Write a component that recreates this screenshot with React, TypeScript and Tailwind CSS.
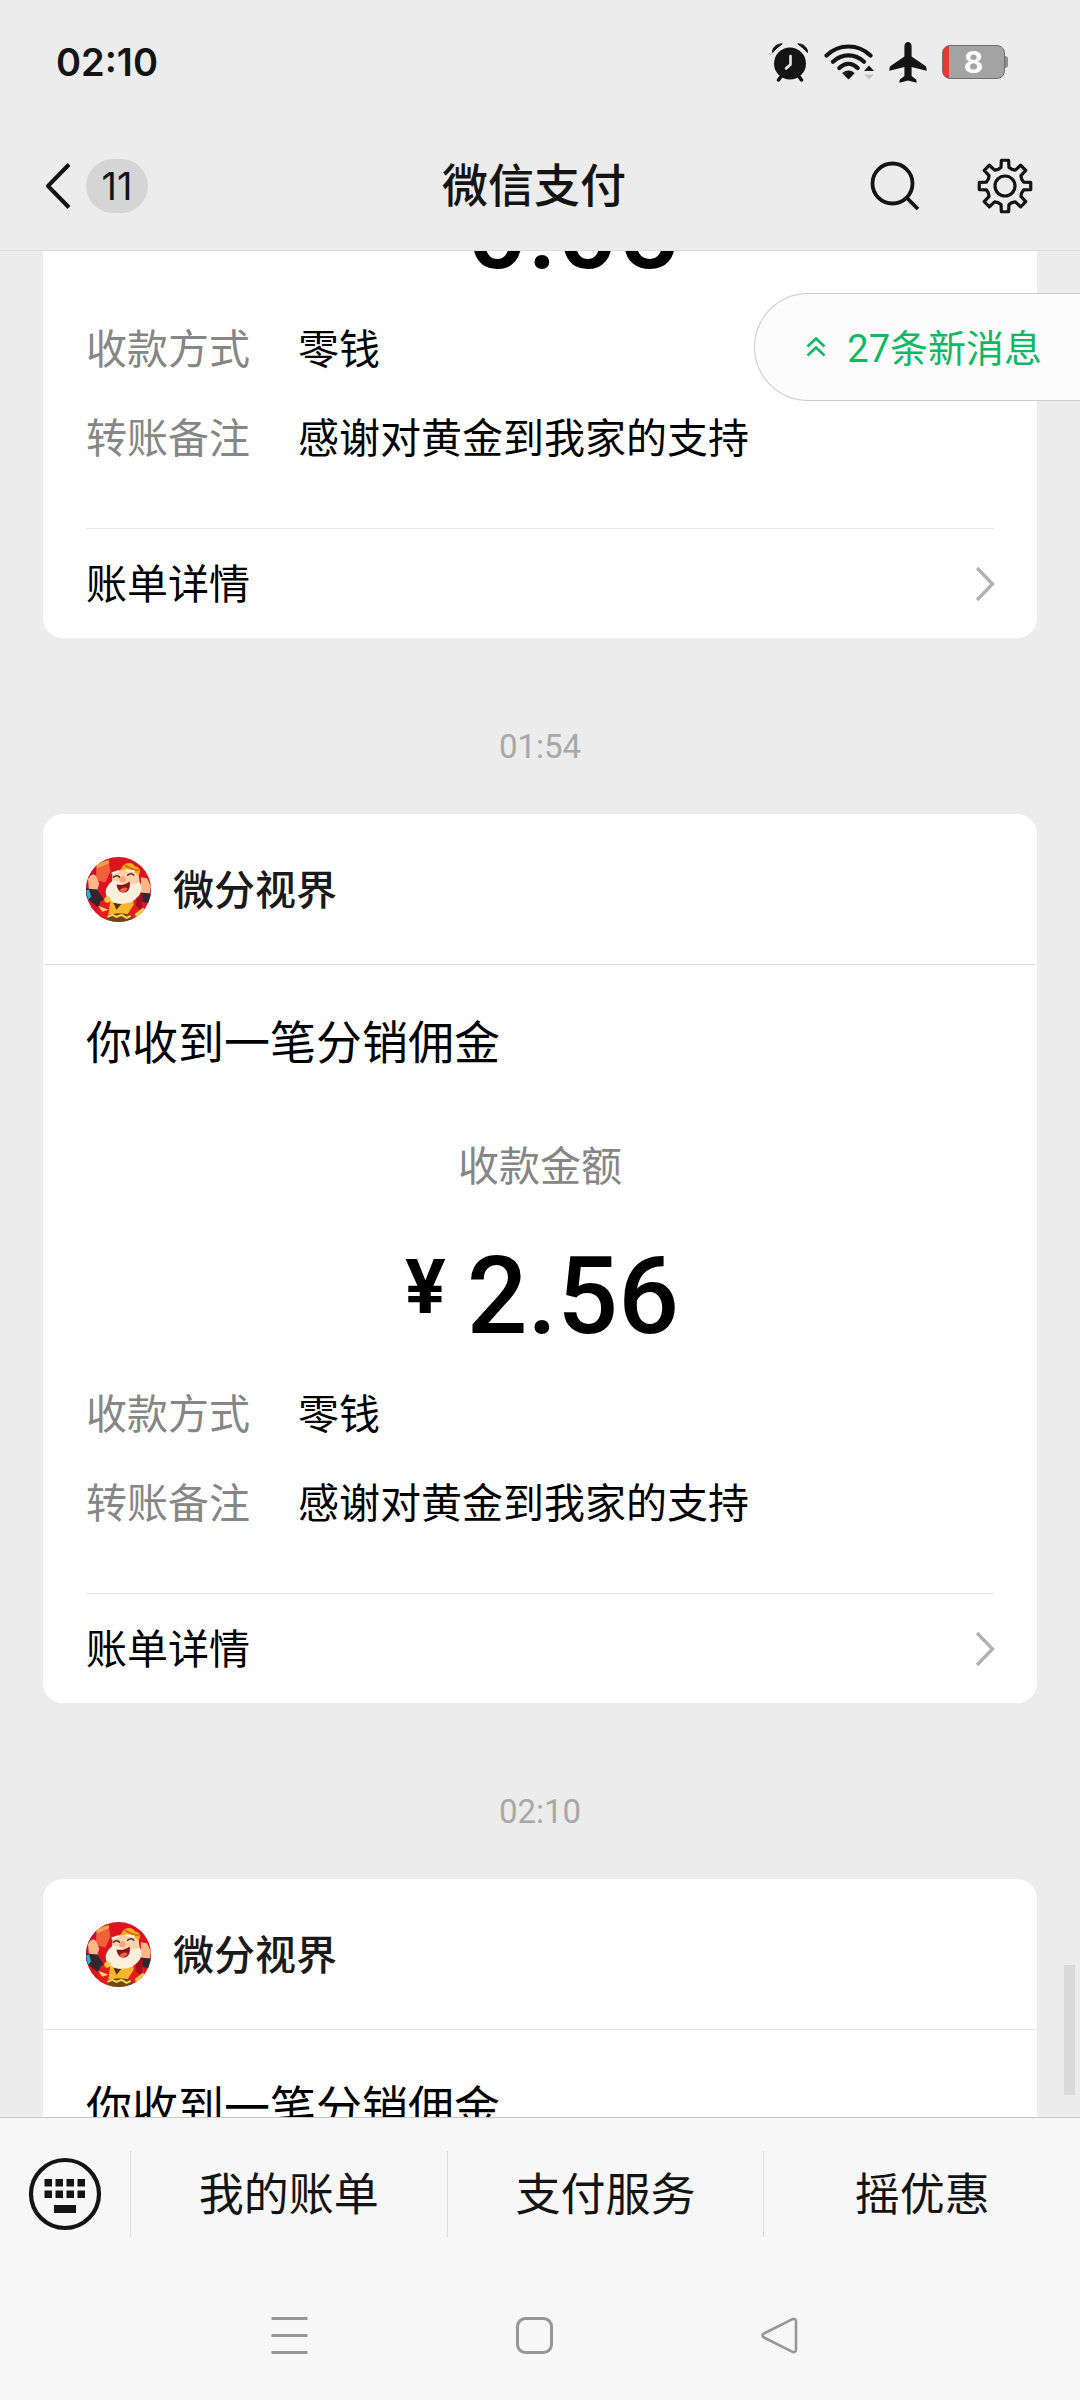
import React from "react";

type Payment = { id: number; time?: string; amount: string };

const payments: Payment[] = [
  { id: 1, amount: "0.05" },
  { id: 2, time: "01:54", amount: "2.56" },
  { id: 3, time: "02:10", amount: "2.56" },
];

const shortcuts = ["我的账单", "支付服务", "摇优惠"];

function AlarmIcon() {
  return (
    <svg className="h-[39px] w-[38px]" viewBox="0 0 38 39" fill="none" aria-hidden="true">
      <path d="M1.6 9.6C1 5 5.500.6 11.200.9 8.500 3 4.500 6 1.600 9.600Z" fill="#141414" stroke="#141414" strokeLinejoin="round" />
      <path d="M36.400 9.600C37 5 32.500.6 26.800.9 29.500 3 33.500 6 36.400 9.600Z" fill="#141414" stroke="#141414" strokeLinejoin="round" />
      <circle cx="19" cy="20.500" r="16" fill="#141414" />
      <path d="M10 33.500 7.500 37M28 33.500 30.500 37" stroke="#141414" strokeWidth="3.500" strokeLinecap="round" />
      <path d="M19.500 13v8.500l-4.500 4" stroke="#ececec" strokeWidth="2.600" strokeLinecap="round" strokeLinejoin="round" />
    </svg>
  );
}

function WifiIcon() {
  return (
    <svg className="h-[36px] w-[50px]" viewBox="0 0 50 36" fill="none" aria-hidden="true">
      <g stroke="#141414" strokeWidth="4.200" strokeLinecap="round">
        <path d="M2.500 11.500C15-.5 34-.5 46.500 11.500" />
        <path d="M9 17.800C18 9.300 31 9.300 40 17.800" />
        <path d="M15.300 24C21 18.500 28 18.500 33.700 24" />
      </g>
      <path d="M18.300 29.200C21.500 25.500 27.500 25.500 30.700 29.200L24.500 35.500Z" fill="#141414" />
      <path d="m45 21.500 5 5.500H40Z" fill="#141414" />
      <path d="M40 30.500h10L45 35.500Z" fill="#c4c4c4" />
    </svg>
  );
}

function PlaneIcon() {
  return (
    <svg className="h-[41px] w-[38px]" viewBox="0 0 38 41" fill="#141414" aria-hidden="true">
      <path d="M19 0c2.200 0 3.600 2 3.600 4.500v10l13.500 9.200c1.200.8 1.800 2.800 1.500 5L22.600 25v9l4.200 3.200c.7.600.9 2 .7 3.600L19 38.500l-8.500 2.300c-.2-1.600 0-3 .7-3.600l4.200-3.200v-9L.4 28.700c-.3-2.200.3-4.200 1.500-5l13.500-9.200v-10C15.400 2 16.800 0 19 0Z" />
    </svg>
  );
}

function Battery() {
  return (
    <span className="flex items-center" role="img" aria-label="电量 8%">
      <span className="flex h-[34px] w-[63px] items-center justify-center overflow-hidden rounded-[8px] border border-[#6f6f6f] bg-[linear-gradient(to_right,#e53935_6px,#a3a3a3_6px)] font-[Inter] text-[30px] leading-none font-bold text-white">
        8
      </span>
      <span className="h-[12px] w-[3px] rounded-r-[3px] bg-[#8c8c8c]" />
    </span>
  );
}

function BackIcon() {
  return (
    <svg className="h-[48px] w-[26px]" viewBox="0 0 26 48" fill="none" stroke="#141414" strokeWidth="4" strokeLinejoin="round" aria-hidden="true">
      <path d="M24 2.500 3 24l21 21.500" />
    </svg>
  );
}

function SearchIcon() {
  return (
    <svg className="h-[50px] w-[50px]" viewBox="0 0 50 50" fill="none" stroke="#141414" strokeWidth="3.800" aria-hidden="true">
      <circle cx="22.500" cy="22.500" r="20" />
      <path d="m36.500 36.500 11.500 11.500" />
    </svg>
  );
}

// One gear tooth per 45 degrees, joined by shallow valleys.
const gearPoints = Array.from({ length: 8 }, (_, i) => {
  const base = i * 45;
  return [
    [-22, 18],
    [-12, 19],
    [-8, 26],
    [8, 26],
    [12, 19],
  ]
    .map(([angle, radius]) => {
      const rad = ((base + angle) * Math.PI) / 180;
      return `${(28 + radius * Math.sin(rad)).toFixed(2)},${(28 - radius * Math.cos(rad)).toFixed(2)}`;
    })
    .join(" ");
}).join(" ");

function GearIcon() {
  return (
    <svg className="h-[56px] w-[56px]" viewBox="0 0 56 56" fill="none" stroke="#141414" strokeWidth="3.200" strokeLinejoin="round" aria-hidden="true">
      <polygon points={gearPoints} />
      <circle cx="28" cy="28" r="10" />
    </svg>
  );
}

function DoubleUpIcon() {
  return (
    <svg className="h-[22px] w-[20px]" viewBox="0 0 20 22" fill="none" stroke="#10b863" strokeWidth="2.600" aria-hidden="true">
      <path d="m1.500 10.500 8.500-8 8.500 8M1.500 19.500l8.500-8 8.500 8" />
    </svg>
  );
}

function ChevronRight() {
  return (
    <svg className="h-[36px] w-[20px]" viewBox="0 0 20 36" fill="none" stroke="#b2b2b2" strokeWidth="3.400" aria-hidden="true">
      <path d="m2 2 15.500 16L2 34" />
    </svg>
  );
}

function Avatar() {
  return (
    <svg className="size-[65px] rounded-full" viewBox="0 0 64 64" aria-hidden="true">
      <rect width="64" height="64" fill="#dc1420" />
      <path d="M0 0h22L10 34 0 40Z" fill="#c8102e" />
      <path d="M10 7 22 3l2 11-5 11-9-2Z" fill="#f0603c" />
      <path d="M10 7 22 3l1 3-12 5Z" fill="#f9a04a" />
      <path d="M2 22c2-5 6-6 8-3l3 7-2 7-8 1Z" fill="#fbb98a" />
      <path d="M0 31 11 32l8 12-8 5L0 40Z" fill="#33262e" />
      <path d="M0 33l3-1 2 7-3 3Z" fill="#2bb5cf" />
      <path d="M54 20l6 1 4 8-2 9-8-2Z" fill="#fbb98a" />
      <path d="M53 35l11 1v10l-9-2Z" fill="#33262e" />
      <path d="M14 44 24 37l24-1 9 9 2 19H10Z" fill="#e81b1e" />
      <path d="M50 34l6 3-1 17-6-6Z" fill="#a80d1c" />
      <path d="M24 42 40 45l6-6 1 8-11 17H21Z" fill="#f3b62c" />
      <path d="m27 45 8 1-5 6Z" fill="#50351d" />
      <path d="M35 11c3-7 11-6 13-2 6 1 6 5 4 9l-1 4-24-3Z" fill="#f6ac23" />
      <path d="M38 8c5 3 10 5 14 5" stroke="#d86c14" strokeWidth="2" fill="none" />
      <path d="M26 17c5-6 21-6 26 2l2 15H25Z" fill="#fcd1ab" />
      <path d="M27 23c-6 4-10 11-6 17 5 7 20 8 27 2 7-5 8-12 5-17l-8 2-9-1Z" fill="#fcf0dc" />
      <path d="M30 27c5 1 9 0 13-3 1 6-1 11-6 11-4 0-6-3-7-8Z" fill="#8c1418" />
      <path d="M33 33c2-3 6-4 8-2-1 3-5 5-8 2Z" fill="#f3614c" />
      <path d="M27 20c2-2 5-2 6 0M41 18c2-2 5-2 6 0" stroke="#492a22" strokeWidth="1.500" fill="none" strokeLinecap="round" />
      <path d="M26 16l6-2M40 13l7 1" stroke="#fff4df" strokeWidth="2" strokeLinecap="round" />
      <circle cx="36" cy="22" r="3" fill="#f5a57f" />
      <circle cx="21" cy="42" r="3" fill="#f9c440" />
      <path d="M12 48l10 4-6 2Z" fill="#ffd96b" />
      <path d="M20 58c8-4 20-3 26 0l-2 6H22Z" fill="#6d4620" />
      <path d="M21 59l5-2 4 2 5-2 5 3 4-2" stroke="#ffd44a" strokeWidth="2" fill="none" />
      <path d="M48 56l8-6 4 4-10 8Z" fill="#ffcf4a" />
    </svg>
  );
}

function KeyboardIcon() {
  return (
    <svg className="size-[74px]" viewBox="0 0 74 74" aria-hidden="true">
      <circle cx="37" cy="37" r="34" fill="none" stroke="#141414" strokeWidth="4.200" />
      <g fill="#141414">
        {[17, 28, 39, 50].map((x) => (
          <React.Fragment key={x}>
            <rect x={x - 0.5} y="22" width="7.500" height="7.500" />
            <rect x={x - 0.5} y="33.500" width="7.500" height="7.500" />
          </React.Fragment>
        ))}
        <rect x="26" y="48" width="22" height="8" />
      </g>
    </svg>
  );
}

function Row({ label, value }: { label: string; value: string }) {
  return (
    <div className="flex gap-[48px]">
      <dt className="text-[#868686]">{label}</dt>
      <dd>{value}</dd>
    </div>
  );
}

function PaymentCard({ amount }: { amount: string }) {
  return (
    <article className="mx-[43px] rounded-[20px] bg-white text-[41px] leading-[56px] text-black">
      <header className="flex h-[151px] items-center gap-[22px] border-b border-[#e2e2e2] px-[43px]">
        <Avatar />
        <h2 className="pt-[4px] font-medium text-[#1a1a1a]">微分视界</h2>
      </header>
      <div className="mx-[43px] border-b border-[#e6e6e6] pt-[48px] pb-[61px]">
        <h3 className="text-[46px] leading-[60px]">你收到一笔分销佣金</h3>
        <p className="mt-[66px] text-center text-[#868686]">收款金额</p>
        <p className="mt-[46px] flex justify-center gap-[21px] pl-[4px] font-[Roboto] text-[107px] leading-[112px] font-medium">
          <span className="text-[76px] leading-[92px] font-bold">¥</span>
          <span>{amount}</span>
        </p>
        <dl className="mt-[34px] flex flex-col gap-[33px]">
          <Row label="收款方式" value="零钱" />
          <Row label="转账备注" value="感谢对黄金到我家的支持" />
        </dl>
      </div>
      <a href="#bill" className="flex h-[109px] items-center justify-between pr-[42px] pl-[43px]">
        <span className="pt-[2px]">账单详情</span>
        <ChevronRight />
      </a>
    </article>
  );
}

export default function App() {
  return (
    <div className="flex h-screen flex-col bg-[#ececec] font-[Roboto,'Noto_Sans_CJK_SC',sans-serif] text-[#141414]">
      <header className="shrink-0 border-b border-[#dcdcdc]">
        <div className="flex h-[124px] items-center justify-between pr-[72px] pl-[56px]">
          <time className="font-[Inter] text-[38px] font-semibold">02:10</time>
          <div className="flex items-center gap-[15px]">
            <AlarmIcon />
            <WifiIcon />
            <PlaneIcon />
            <Battery />
          </div>
        </div>
        <div className="grid h-[126px] grid-cols-[1fr_auto_1fr] items-center pr-[47px] pb-[3px] pl-[45px]">
          <button type="button" aria-label="返回" className="flex items-center gap-[15px] justify-self-start">
            <BackIcon />
            <span className="flex h-[54px] w-[62px] items-center justify-center rounded-full bg-[#d5d5d5] font-[Inter] text-[38px] leading-none">
              11
            </span>
          </button>
          <h1 className="pr-[10px] text-[46px] leading-[60px] font-medium">微信支付</h1>
          <div className="flex items-center gap-[57px] justify-self-end">
            <button type="button" aria-label="搜索">
              <SearchIcon />
            </button>
            <button type="button" aria-label="设置">
              <GearIcon />
            </button>
          </div>
        </div>
      </header>

      <main className="relative min-h-0 flex-1 overflow-hidden">
        {/* The list is scrolled partway through its first card. */}
        <div className="-mt-[502px]">
          {payments.map((payment) => (
            <section key={payment.id}>
              {payment.time && (
                <div className="flex h-[176px] items-center justify-center pt-[42px]">
                  <time className="text-[33px] text-[#a8a8a8]">{payment.time}</time>
                </div>
              )}
              <PaymentCard amount={payment.amount} />
            </section>
          ))}
        </div>
        <button
          type="button"
          className="absolute top-[42px] right-0 flex h-[108px] items-center gap-[21px] rounded-l-full border border-r-0 border-[#cccccc] bg-[#fcfcfc] pr-[38px] pl-[51px] text-[38px] text-[#10b863]"
        >
          <DoubleUpIcon />
          <span className="pt-[4px]">27条新消息</span>
        </button>
        <div className="absolute right-[5px] bottom-[22px] h-[130px] w-[11px] bg-[#dadada]" />
      </main>

      <footer className="shrink-0 border-t border-[#c8c8c8] bg-[#f7f7f7]">
        <div className="flex h-[152px] items-center text-[45px]">
          <button type="button" aria-label="键盘" className="flex w-[130px] shrink-0 justify-center">
            <KeyboardIcon />
          </button>
          {shortcuts.map((name) => (
            <button key={name} type="button" className="h-[86px] flex-1 border-l border-[#dcdcdc] pt-[4px]">
              {name}
            </button>
          ))}
        </div>
        <nav className="flex h-[130px] items-center justify-center gap-[208px] pr-[12px]">
          <button type="button" aria-label="最近任务">
            <svg className="size-[37px]" viewBox="0 0 37 37" stroke="#979797" strokeWidth="3" aria-hidden="true">
              <path d="M.5 1.500h36M.5 18.500h36M.5 35.500h36" />
            </svg>
          </button>
          <button type="button" aria-label="主屏幕">
            <svg className="size-[37px]" viewBox="0 0 37 37" fill="none" stroke="#979797" strokeWidth="3" aria-hidden="true">
              <rect x="1.500" y="1.500" width="34" height="34" rx="8" />
            </svg>
          </button>
          <button type="button" aria-label="返回上一页">
            <svg className="size-[37px]" viewBox="0 0 37 37" fill="none" stroke="#979797" strokeWidth="2.600" aria-hidden="true">
              <path d="M3 16.500 31 2.300c2-1 4 0 4 2v28.400c0 2-2 3-4 2L3 20.500c-2-1-2-3 0-4Z" />
            </svg>
          </button>
        </nav>
      </footer>
    </div>
  );
}
